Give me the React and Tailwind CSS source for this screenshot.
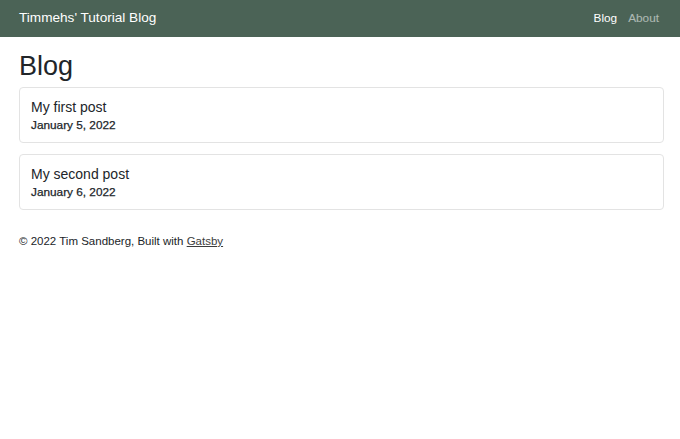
import React from "react";

const posts = [
  { title: "My first post", date: "January 5, 2022" },
  { title: "My second post", date: "January 6, 2022" },
];

const App = () => {
  return (
    <div className="min-h-screen bg-white text-[#212529]" style={{ fontFamily: '"Liberation Sans", Arial, sans-serif' }}>
      <nav className="h-[37px] bg-[#4b6356] flex items-center justify-between pl-[19px] pr-[21px]">
        <span className="text-[13.6px] text-white">Timmehs' Tutorial Blog</span>
        <div className="flex gap-[11px] text-[11.8px]">
          <span className="text-white">Blog</span>
          <span className="text-white/55">About</span>
        </div>
      </nav>
      <main className="pl-[19px] pr-[16px]">
        <h1 className="text-[27px] leading-[1.2] mt-[13px] mb-[5px] font-normal">Blog</h1>
        <div className="flex flex-col gap-[11px]">
          {posts.map((p) => (
            <div key={p.title} className="border border-[#e3e3e3] rounded-[4px] px-[11px] py-[9px] h-[56px]">
              <div className="text-[14px] leading-[20px]">{p.title}</div>
              <div className="text-[11.8px] leading-[17px] [-webkit-text-stroke:0.25px_#212529]">{p.date}</div>
            </div>
          ))}
        </div>
        <footer className="mt-[23px] text-[11.5px]">
          © 2022 Tim Sandberg, Built with <a className="underline text-[#3c3c3c]">Gatsby</a>
        </footer>
      </main>
    </div>
  );
};

export default App;
